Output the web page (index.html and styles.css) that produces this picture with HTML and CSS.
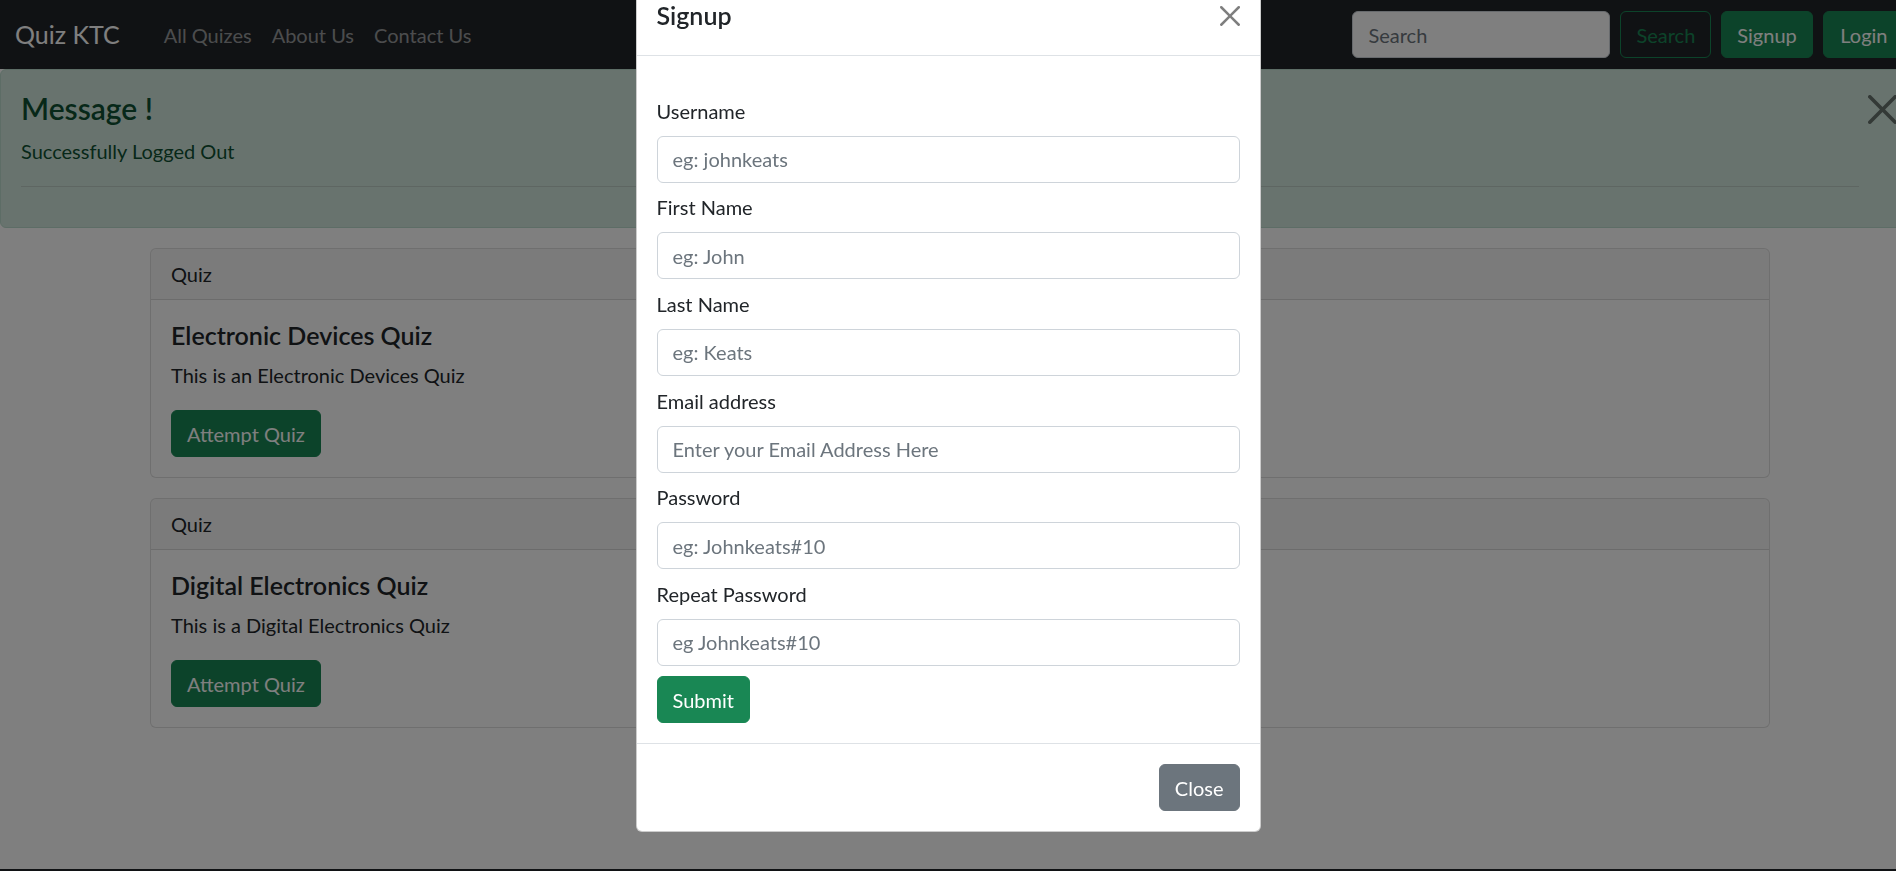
FILE: index.html
```html
<!DOCTYPE html>
<html lang="en">
<head>
<meta charset="utf-8">
<title>Quiz KTC</title>
<link rel="stylesheet" href="styles.css">
</head>
<body>
<div class="page">
  <nav class="navbar">
    <a class="brand" href="#">Quiz KTC</a>
    <ul class="nav">
      <li><a class="nav-link" href="#">All Quizes</a></li>
      <li><a class="nav-link" href="#">About Us</a></li>
      <li><a class="nav-link" href="#">Contact Us</a></li>
    </ul>
    <form class="nav-form">
      <input class="form-control search-input" type="search" placeholder="Search">
      <button class="btn btn-outline-success" type="button">Search</button>
      <button class="btn btn-success" type="button">Signup</button>
      <button class="btn btn-success btn-login" type="button">Login</button>
    </form>
  </nav>

  <div class="alert">
    <h4 class="alert-heading">Message !</h4>
    <p class="alert-text">Successfully Logged Out</p>
    <hr class="alert-rule">
    <button class="alert-close" type="button" aria-label="Close">
      <svg viewBox="0 0 16 16" width="29" height="29"><path d="M.293.293a1 1 0 0 1 1.414 0L8 6.586 14.293.293a1 1 0 1 1 1.414 1.414L9.414 8l6.293 6.293a1 1 0 0 1-1.414 1.414L8 9.414l-6.293 6.293a1 1 0 0 1-1.414-1.414L6.586 8 .293 1.707a1 1 0 0 1 0-1.414z"/></svg>
    </button>
  </div>

  <main class="container">
    <div class="card">
      <div class="card-header">Quiz</div>
      <div class="card-body">
        <h5 class="card-title">Electronic Devices Quiz</h5>
        <p class="card-text">This is an Electronic Devices Quiz</p>
        <a class="btn btn-success" href="#">Attempt Quiz</a>
      </div>
    </div>
    <div class="card">
      <div class="card-header">Quiz</div>
      <div class="card-body">
        <h5 class="card-title">Digital Electronics Quiz</h5>
        <p class="card-text">This is a Digital Electronics Quiz</p>
        <a class="btn btn-success" href="#">Attempt Quiz</a>
      </div>
    </div>
  </main>

  <footer class="footer"></footer>
</div>

<div class="backdrop"></div>

<div class="modal">
  <div class="modal-dialog">
    <div class="modal-header">
      <h5 class="modal-title">Signup</h5>
      <button class="modal-close" type="button" aria-label="Close">
        <svg viewBox="0 0 16 16" width="20" height="20"><path d="M.293.293a1 1 0 0 1 1.414 0L8 6.586 14.293.293a1 1 0 1 1 1.414 1.414L9.414 8l6.293 6.293a1 1 0 0 1-1.414 1.414L8 9.414l-6.293 6.293a1 1 0 0 1-1.414-1.414L6.586 8 .293 1.707a1 1 0 0 1 0-1.414z"/></svg>
      </button>
    </div>
    <div class="modal-body">
      <form class="signup-form">
        <div class="field">
          <label class="form-label" for="username">Username</label>
          <input class="form-control" id="username" type="text" placeholder="eg: johnkeats">
        </div>
        <div class="field">
          <label class="form-label" for="fname">First Name</label>
          <input class="form-control" id="fname" type="text" placeholder="eg: John">
        </div>
        <div class="field">
          <label class="form-label" for="lname">Last Name</label>
          <input class="form-control" id="lname" type="text" placeholder="eg: Keats">
        </div>
        <div class="field">
          <label class="form-label" for="email">Email address</label>
          <input class="form-control" id="email" type="email" placeholder="Enter your Email Address Here">
        </div>
        <div class="field">
          <label class="form-label" for="pass">Password</label>
          <input class="form-control" id="pass" type="text" placeholder="eg: Johnkeats#10">
        </div>
        <div class="field">
          <label class="form-label" for="pass2">Repeat Password</label>
          <input class="form-control" id="pass2" type="text" placeholder="eg Johnkeats#10">
        </div>
        <div class="submit-row">
          <button class="btn btn-success" type="button">Submit</button>
        </div>
      </form>
    </div>
    <div class="modal-footer">
      <button class="btn btn-secondary" type="button">Close</button>
    </div>
  </div>
</div>
</body>
</html>
```

FILE: styles.css
```css
* { box-sizing: border-box; }

html, body {
  margin: 0;
  padding: 0;
  overflow: hidden;
  height: 100%;
}

body {
  font-family: Lato, "Segoe UI", "Noto Sans", sans-serif;
  font-size: 20px;
  line-height: 1.5;
  color: #212529;
  background: #fff;
}

.page {
  width: 1920px;
}

a { text-decoration: none; }

/* Form control */
.form-control {
  display: block;
  width: 100%;
  height: 47px;
  padding: 7.5px 15px;
  font-family: inherit;
  font-size: 20px;
  line-height: 1.5;
  color: #212529;
  background: #fff;
  border: 1px solid #ced4da;
  border-radius: 6px;
}

.form-control::placeholder {
  color: #6c757d;
  opacity: 1;
}

/* Buttons */
.btn {
  display: inline-block;
  height: 47px;
  padding: 7.5px 15px;
  font-family: inherit;
  font-size: 20px;
  line-height: 1.5;
  border: 1px solid transparent;
  border-radius: 6px;
  cursor: pointer;
}

.btn-success {
  background: #198754;
  border-color: #198754;
  color: #fff;
}

.btn-outline-success {
  background: transparent;
  border-color: #198754;
  color: #198754;
}

.btn-secondary {
  background: #6c757d;
  border-color: #6c757d;
  color: #fff;
}

/* Navbar */
.navbar {
  display: flex;
  align-items: center;
  height: 69px;
  padding: 0 15px;
  background: #212529;
}

.brand {
  font-size: 25px;
  color: #fff;
  margin-right: 34px;
}

.nav {
  display: flex;
  list-style: none;
  margin: 0;
  padding: 0;
}

.nav-link {
  display: block;
  padding: 8px 10px;
  color: rgba(255, 255, 255, 0.55);
}

.nav-form {
  margin-left: auto;
  display: flex;
  gap: 10px;
}

.nav-form .search-input {
  width: 258px;
}

.nav-form .btn-login {
  padding: 7.5px 16.5px;
}

/* Alert */
.alert {
  position: relative;
  padding: 20px 60px 20px 20px;
  margin-bottom: 20px;
  background: #d1e7dd;
  border: 1px solid #badbcc;
  border-radius: 6px;
  color: #0f5132;
}

.alert-heading {
  margin: 0 0 10px;
  font-size: 30px;
  font-weight: 600;
  line-height: 1.2;
}

.alert-text {
  margin: 0 0 20px;
}

.alert-rule {
  margin: 0 0 20px;
  border: 0;
  border-top: 1px solid currentColor;
  opacity: 0.25;
}

.alert-close {
  position: absolute;
  top: 25px;
  right: 22px;
  padding: 0;
  border: 0;
  background: transparent;
  line-height: 0;
  opacity: 0.5;
}

/* Cards */
.container {
  width: 1650px;
  margin: 0 auto;
  padding: 0 15px;
  display: flex;
  flex-direction: column;
  gap: 20px;
}

.card {
  border: 1px solid rgba(0, 0, 0, 0.125);
  border-radius: 6px;
  background: #fff;
  overflow: hidden;
}

.card-header {
  padding: 10px 20px;
  background: rgba(0, 0, 0, 0.03);
  border-bottom: 1px solid rgba(0, 0, 0, 0.125);
}

.card-body {
  padding: 20px;
}

.card-title {
  margin: 0 0 10px;
  font-size: 25px;
  font-weight: 600;
  line-height: 1.2;
}

.card-text {
  margin: 0 0 20px;
}

.footer {
  margin-top: 141px;
  height: 3px;
  background: #212529;
}

/* Backdrop & modal */
.backdrop {
  position: fixed;
  inset: 0;
  background: rgba(0, 0, 0, 0.5);
}

.modal {
  position: fixed;
  inset: 0;
}

.modal-dialog {
  width: 625px;
  margin: -24px auto 0;
  background: #fff;
  border: 1px solid rgba(0, 0, 0, 0.2);
  border-radius: 6px;
}

.modal-header {
  display: flex;
  align-items: center;
  justify-content: space-between;
  padding: 20px;
  border-bottom: 1px solid #dee2e6;
}

.modal-title {
  margin: 0;
  font-size: 25px;
  font-weight: 600;
  line-height: 1.5;
}

.modal-close {
  padding: 0;
  border: 0;
  background: transparent;
  line-height: 0;
  opacity: 0.5;
}

.modal-body {
  padding: 40px 20px 20px;
}

.signup-form {
  display: flex;
  flex-direction: column;
  gap: 9.7px;
}

.form-label {
  display: block;
  margin-bottom: 10px;
}

.submit-row {
  padding-top: 0.5px;
}

.modal-footer {
  display: flex;
  justify-content: flex-end;
  padding: 20px;
  border-top: 1px solid #dee2e6;
}
```
